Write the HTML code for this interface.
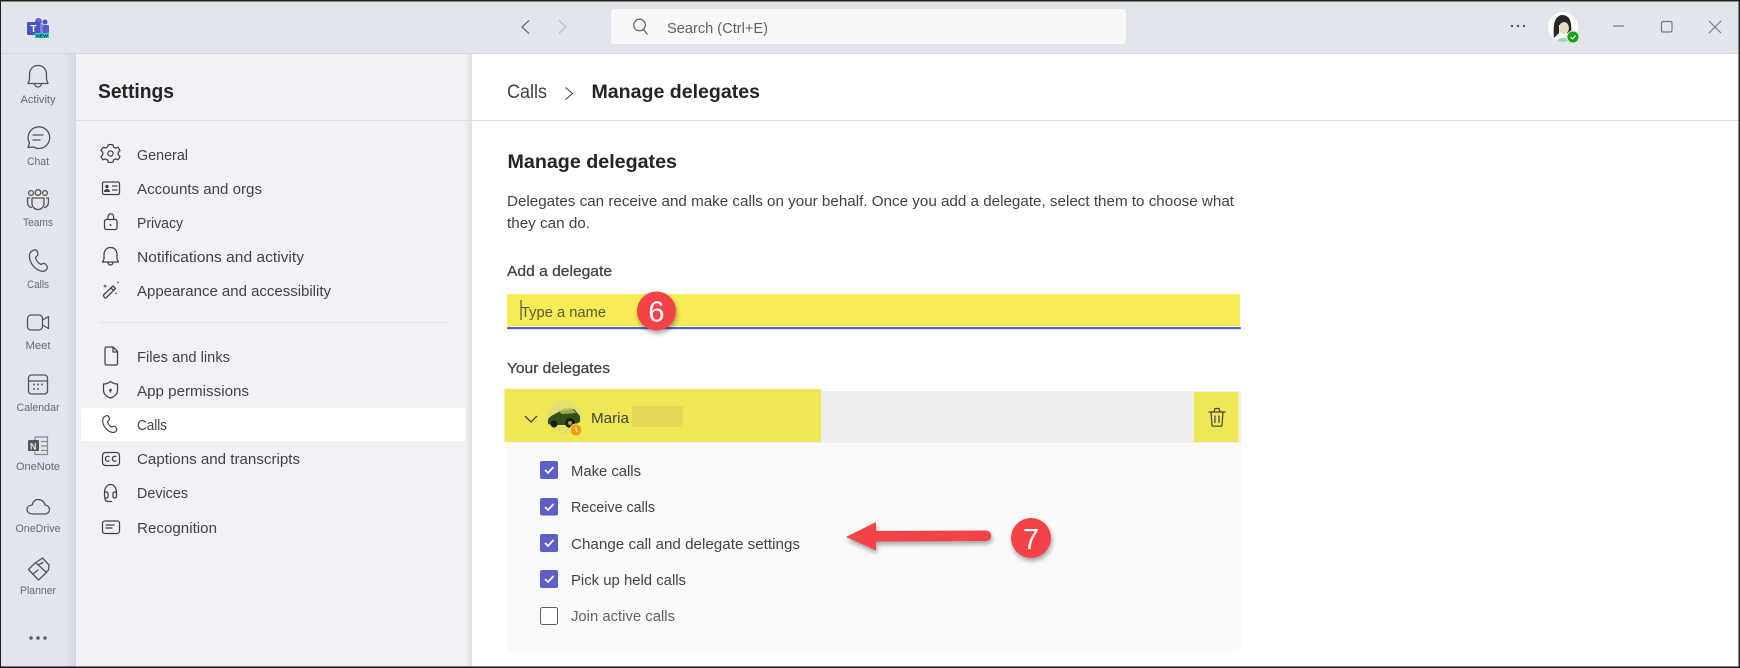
<!DOCTYPE html>
<html lang="en"><head><meta charset="utf-8"><title>Manage delegates</title>
<style>
html,body{margin:0;padding:0;background:#fff;width:1740px;height:668px;overflow:hidden}
svg{display:block;position:absolute;left:0;top:0}
text{font-family:"Liberation Sans",sans-serif}
.r{font-size:11px;fill:#6a6a6a;text-anchor:middle}
.s{font-size:15px;fill:#424242}
.m{fill:#424242;stroke:#424242;stroke-width:.25;font-size:14.5px}
.i{fill:none;stroke:#555;stroke-width:1.3;stroke-linecap:round;stroke-linejoin:round}
.j{fill:none;stroke:#424242;stroke-width:1.25;stroke-linecap:round;stroke-linejoin:round}
</style></head><body>
<svg width="1740" height="668" viewBox="0 0 1740 668" xmlns="http://www.w3.org/2000/svg">
<defs>
<linearGradient id="rs" x1="0" x2="1" y1="0" y2="0"><stop offset="0" stop-color="#e2e5ed"/><stop offset="1" stop-color="#d5d8e0"/></linearGradient>
<linearGradient id="ss" x1="0" x2="1" y1="0" y2="0"><stop offset="0" stop-color="#f1f2f6"/><stop offset="1" stop-color="#e0e1e6"/></linearGradient>
<filter id="sh" x="-30%" y="-30%" width="170%" height="170%"><feDropShadow dx="1" dy="3" stdDeviation="2.5" flood-color="#000" flood-opacity=".35"/></filter>
</defs>
<rect width="1740" height="668" fill="#fff"/>
<!-- title bar -->
<rect width="1740" height="53" fill="#e2e5ec"/>
<rect y="53" width="1740" height="1" fill="#d3d5da"/>
<!-- rail -->
<rect y="54" width="76" height="614" fill="#e2e5ed"/>
<rect x="64" y="54" width="12" height="614" fill="url(#rs)"/>
<!-- sidebar -->
<rect x="76" y="54" width="396" height="614" fill="#f1f2f6"/>
<rect x="464" y="54" width="8" height="614" fill="url(#ss)"/>
<rect x="76" y="120" width="1664" height="1" fill="#dfdfe2"/>
<rect x="99" y="322" width="349" height="1" fill="#e2e3e7"/>
<rect x="81" y="408" width="385" height="33" rx="2" fill="#fff"/>

<!-- teams logo -->
<circle cx="38.500" cy="21.500" r="3.500" fill="#6166c9"/><circle cx="45" cy="22" r="2.500" fill="#4f55b8"/>
<rect x="41" y="25" width="8" height="8" rx="1" fill="#5a60c4"/>
<rect x="33" y="24" width="10" height="10" rx="1" fill="#7b83eb"/>
<rect x="27" y="22" width="13" height="13" rx="1" fill="#4b53bc"/>
<text x="30.500" y="32" font-size="10" font-weight="700" fill="#fff">T</text>
<rect x="35" y="33" width="14" height="5" fill="#1fd6c6"/>
<text x="36" y="37.500" font-size="4.500" font-weight="700" fill="#123" textLength="12" lengthAdjust="spacingAndGlyphs">NEW</text>

<!-- nav chevrons -->
<path d="M529 20.500l-7 6.500 7 6.500" fill="none" stroke="#555" stroke-width="1.100"/>
<path d="M559 20.500l7 6.500-7 6.500" fill="none" stroke="#b5b8be" stroke-width="1.100"/>
<!-- search -->
<rect x="611" y="9" width="515" height="35" rx="3" fill="#f8f8f9"/>
<circle cx="639.500" cy="25" r="5.800" fill="none" stroke="#555" stroke-width="1.100"/><path d="M643.500 29.500l4 5" stroke="#555" stroke-width="1.100"/>
<text x="667" y="33" font-size="14.500" fill="#616161" textLength="101" lengthAdjust="spacingAndGlyphs">Search (Ctrl+E)</text>
<!-- title right -->
<circle cx="1512" cy="26" r="1.200" fill="#555"/><circle cx="1518" cy="26" r="1.200" fill="#555"/><circle cx="1524" cy="26" r="1.200" fill="#555"/>
<circle cx="1563" cy="27" r="15" fill="#fff"/>
<path d="M1554 38c-1-12 0-22 8-23 9 0 10 9 9 20l-4-2v-8h-8v8z" fill="#2a2527"/>
<ellipse cx="1564" cy="28" rx="5" ry="6" fill="#e9dcc0"/>
<path d="M1557 41c2-4 10-4 12 0l-6 1z" fill="#9fd3b4"/>
<circle cx="1573" cy="37" r="6.500" fill="#e2e5ec"/><circle cx="1573" cy="37" r="5.500" fill="#13a10e"/><path d="M1570.500 37l2 2 3-3.500" fill="none" stroke="#fff" stroke-width="1.200"/>
<path d="M1613 26h11" stroke="#777" stroke-width="1.200"/>
<rect x="1661.500" y="21.500" width="10.500" height="10.500" rx="1.500" fill="none" stroke="#777" stroke-width="1.200"/>
<path d="M1709 21l12 12M1721 21l-12 12" stroke="#777" stroke-width="1.100"/>

<!-- rail icons -->
<g class="i">
<path d="M38 65.500c-5.500 0-8.500 4-8.500 9v5l-1.500 4h20l-1.500-4v-5c0-5-3-9-8.500-9z"/><path d="M34.500 84c.5 2 2 3 3.500 3s3-1 3.500-3"/>
<path d="M28 147.500l1.500-4.500a10.800 10.800 0 1 1 4 4z"/><path d="M33 135h10M33 140h7"/>
<circle cx="31" cy="193" r="2.400"/><circle cx="38" cy="192.500" r="2.800"/><circle cx="45" cy="193" r="2.400"/>
<path d="M32 198h12v5.500a6 6 0 0 1-12 0z"/><path d="M29.500 198h-2v4c0 3 1.500 5 4 5.500M46.500 198h2v4c0 3-1.500 5-4 5.500"/>
<path id="ph" d="M31.500 251.500c1.500-1.500 3.500-2 4.500-1.500 1 .5 2 3 2 4.500 0 1-1.500 1.500-2.500 3 .5 2.500 2.500 5.500 5.500 7 1.500-1 2.500-1.500 3.500-1 1.200.5 2.800 2.500 3 4 0 1.500-2 3.500-4 3.800-3 .3-7-1.500-10-5-3-3.500-4.500-8-4-11 .2-1.500.8-3.300 2-3.800z"/>
<rect x="27.500" y="315" width="15" height="15" rx="3.500"/><path d="M42.500 320l6-3.500v12l-6-3.500"/>
<rect x="28.500" y="375" width="19" height="19" rx="3"/><path d="M28.500 381h19"/>
<path d="M38 499.500c-3 0-5.300 2.200-5.800 5.500-3 .3-5.200 2-5.200 4.500 0 2.500 2.500 4.500 5 4.500h13c2.500 0 4.500-2 4.500-4.500 0-2.500-2-4.200-4.500-4.500-.5-3.300-3.500-5.500-7-5.500z"/>
<path d="M28.500 569.500l7-7 11 10-8 7.500z"/><path d="M36 562.500l6.500-4.500 6.500 7-.5 5-2.500 2.500"/><path d="M38 565l5-2.500M33 574l5-4"/>
</g>
<g fill="#616161"><circle cx="34" cy="384.500" r="1"/><circle cx="38" cy="384.500" r="1"/><circle cx="42" cy="384.500" r="1"/><circle cx="34" cy="389" r="1"/><circle cx="38" cy="389" r="1"/></g>
<rect x="28" y="440" width="11" height="11" rx="1" fill="#555"/><text x="30" y="449.500" font-size="9" font-weight="700" fill="#e2e5ed">N</text>
<path d="M35 440v-3h12.500v17.500h-12.500v-3M41 441.500h6.500M41 446h6.500M41 450.500h6.500" fill="none" stroke="#8a8a8a" stroke-width="1.200"/>
<circle cx="31" cy="638" r="1.800" fill="#616161"/><circle cx="38" cy="638" r="1.800" fill="#616161"/><circle cx="45" cy="638" r="1.800" fill="#616161"/>

<!-- rail labels -->
<text class="r" x="38" y="103" textLength="35" lengthAdjust="spacingAndGlyphs">Activity</text>
<text class="r" x="38" y="165" textLength="22" lengthAdjust="spacingAndGlyphs">Chat</text>
<text class="r" x="38" y="226" textLength="30" lengthAdjust="spacingAndGlyphs">Teams</text>
<text class="r" x="38" y="288" textLength="22" lengthAdjust="spacingAndGlyphs">Calls</text>
<text class="r" x="38" y="349" textLength="25" lengthAdjust="spacingAndGlyphs">Meet</text>
<text class="r" x="38" y="411" textLength="43" lengthAdjust="spacingAndGlyphs">Calendar</text>
<text class="r" x="38" y="470" textLength="44" lengthAdjust="spacingAndGlyphs">OneNote</text>
<text class="r" x="38" y="532" textLength="45" lengthAdjust="spacingAndGlyphs">OneDrive</text>
<text class="r" x="38" y="594" textLength="36" lengthAdjust="spacingAndGlyphs">Planner</text>

<!-- settings -->
<text x="98" y="98" font-size="20" font-weight="700" fill="#242424" textLength="76" lengthAdjust="spacingAndGlyphs">Settings</text>
<text class="s" x="137" y="160" textLength="51" lengthAdjust="spacingAndGlyphs">General</text>
<text class="s" x="137" y="194" textLength="125" lengthAdjust="spacingAndGlyphs">Accounts and orgs</text>
<text class="s" x="137" y="228" textLength="46" lengthAdjust="spacingAndGlyphs">Privacy</text>
<text class="s" x="137" y="262" textLength="167" lengthAdjust="spacingAndGlyphs">Notifications and activity</text>
<text class="s" x="137" y="296" textLength="194" lengthAdjust="spacingAndGlyphs">Appearance and accessibility</text>
<text class="s" x="137" y="362" textLength="93" lengthAdjust="spacingAndGlyphs">Files and links</text>
<text class="s" x="137" y="396" textLength="112" lengthAdjust="spacingAndGlyphs">App permissions</text>
<text class="s" x="137" y="430" textLength="30" lengthAdjust="spacingAndGlyphs">Calls</text>
<text class="s" x="137" y="464" textLength="163" lengthAdjust="spacingAndGlyphs">Captions and transcripts</text>
<text class="s" x="137" y="498" textLength="51" lengthAdjust="spacingAndGlyphs">Devices</text>
<text class="s" x="137" y="533" textLength="80" lengthAdjust="spacingAndGlyphs">Recognition</text>

<!-- settings icons -->
<g class="j">
<path d="M110.500 144.500c.8 0 1.600 .1 2.400 .3l.6 2.300 2.200 1 2.200-.9c1 1 1.700 2.200 2.100 3.500l-1.800 1.500v2.600l1.800 1.500c-.4 1.300-1.100 2.500-2.100 3.500l-2.200-.9-2.200 1-.6 2.300c-1.600 .4-3.200 .4-4.800 0l-.6-2.300-2.200-1-2.200 .9c-1-1-1.700-2.200-2.100-3.500l1.800-1.500v-2.600l-1.800-1.500c.4-1.300 1.100-2.500 2.100-3.500l2.200 .9 2.200-1 .6-2.300c.8-.2 1.600-.3 2.400-.3z"/><circle cx="110.500" cy="153.500" r="2.600"/>
<rect x="102.500" y="182" width="17" height="12.500" rx="1.500"/><path d="M112.500 186h4.500M112.500 190h4.500"/>
<rect x="104.500" y="219.500" width="12.500" height="10" rx="1.800"/><path d="M108 219.500v-3a2.800 2.800 0 0 1 5.600 0v3"/>
<path d="M110.500 247.500c-4.500 0-6.500 3.500-6.500 7.500v4l-1.500 3h16l-1.500-3v-4c0-4-2-7.500-6.500-7.500z"/><path d="M108 262.500c.3 1.500 1.300 2.500 2.500 2.500s2.200-1 2.500-2.500"/>
<path d="M103.500 295l9.500-9 2.500 2.500-9.500 9.500c-1 .5-2.500-1.500-2.500-3z"/><path d="M111 288l2.500 2.500"/>
<path d="M105 348.500c0-1 .5-1.500 1.500-1.500h6.500l4.500 4.500v12c0 1-.5 1.500-1.500 1.500h-9.500c-1 0-1.500-.5-1.500-1.500z"/><path d="M113 347v5h4.500"/>
<path d="M110.500 381.500c2.500 2 5 2.500 7 2.500v6c0 4-2.500 6.500-7 8-4.500-1.500-7-4-7-8v-6c2 0 4.500-.5 7-2.500z"/><path d="M110.500 392v-2"/>
<path transform="translate(79.800 220.800) scale(.78)" d="M31.500 251.500c1.500-1.500 3.500-2 4.500-1.500 1 .5 2 3 2 4.500 0 1-1.500 1.500-2.500 3 .5 2.500 2.500 5.500 5.500 7 1.500-1 2.500-1.500 3.500-1 1.200.5 2.800 2.500 3 4 0 1.500-2 3.500-4 3.800-3 .3-7-1.500-10-5-3-3.500-4.500-8-4-11 .2-1.500.8-3.300 2-3.800z" stroke-width="1.500"/>
<rect x="102.500" y="452.500" width="17" height="13" rx="3"/>
<path d="M109 456.500a2.500 2.500 0 1 0 0 4.500M116 456.500a2.500 2.500 0 1 0 0 4.500"/>
<path d="M104.500 493c0-5 2.500-8.500 6-8.500s6 3.500 6 8.500"/><rect x="104.500" y="492" width="3.500" height="6" rx="1.500"/><rect x="113" y="492" width="3.500" height="6" rx="1.500"/><path d="M105 498c0 3 1 3.500 3.500 3.500M108.500 501.500h3"/>
<rect x="102.500" y="521" width="17" height="12.500" rx="2.500"/><path d="M106 525h8M106 528h6"/>
</g>
<circle cx="110.500" cy="225" r="1" fill="#424242"/><circle cx="110.500" cy="390" r="1.300" fill="#424242"/>
<circle cx="107" cy="186.500" r="1.700" fill="#424242"/><path d="M104 192c0-2 1.500-3 3-3s3 1 3 3z" fill="#424242"/>
<path d="M105 284l.6 1.500 1.400.5-1.400.6-.6 1.400-.6-1.400-1.400-.6 1.400-.5zM118 281l.4 1 .9.4-.9.4-.4 1-.4-1-.9-.4.9-.4zM116 292l.4 1 .9.4-.9.4-.4 1-.4-1-.9-.4.9-.4z" fill="#424242"/>

<!-- main header -->
<text x="507" y="98" font-size="19" fill="#424242" textLength="40" lengthAdjust="spacingAndGlyphs">Calls</text>
<path d="M565.500 87.500l7 6-7 6" fill="none" stroke="#424242" stroke-width="1.100"/>
<text x="591.500" y="98" font-size="19" font-weight="700" fill="#242424" textLength="168.500" lengthAdjust="spacingAndGlyphs">Manage delegates</text>
<text x="507.500" y="168" font-size="19" font-weight="700" fill="#242424" textLength="169.500" lengthAdjust="spacingAndGlyphs">Manage delegates</text>
<text x="507" y="206" font-size="14.500" fill="#424242" textLength="727" lengthAdjust="spacingAndGlyphs">Delegates can receive and make calls on your behalf. Once you add a delegate, select them to choose what</text>
<text x="507" y="228" font-size="14.500" fill="#424242" textLength="83" lengthAdjust="spacingAndGlyphs">they can do.</text>
<text class="m" x="507" y="276" textLength="105" lengthAdjust="spacingAndGlyphs">Add a delegate</text>

<!-- input -->
<rect x="507" y="294" width="733" height="32.500" fill="#f6ec55"/>
<rect x="507" y="327" width="734" height="2.200" rx="1" fill="#5b5fc7"/>
<rect x="520.500" y="300" width="1" height="20" fill="#333"/>
<text x="521" y="317" font-size="14.500" fill="#5b5b3a" textLength="85" lengthAdjust="spacingAndGlyphs">Type a name</text>
<circle cx="656.500" cy="311" r="19.500" fill="#f4424a" filter="url(#sh)"/>
<text x="656.500" y="321.500" font-size="29" fill="#fff" text-anchor="middle">6</text>

<text class="m" x="507" y="373" textLength="103" lengthAdjust="spacingAndGlyphs">Your delegates</text>

<!-- delegate panel -->
<path d="M507 391h734v254a8 8 0 0 1-8 8h-718a8 8 0 0 1-8-8z" fill="#fafafa"/>
<rect x="507" y="391" width="734" height="52" fill="#eeeeee"/>
<rect x="504.500" y="389" width="316.500" height="53" fill="#efe755"/>
<rect x="1194" y="392" width="44.500" height="50" fill="#efe755"/>
<path d="M525 416l6 6 6-6" fill="none" stroke="#333" stroke-width="1.200"/>
<circle cx="564" cy="417" r="17" fill="#e6de6e"/>
<path d="M548 420c2-5 8-6 12-9l14-2 6 7v6l-6 3h-22l-4-1z" fill="#35501f"/>
<path d="M558 411l6-3 8 0 4 5-14 1z" fill="#b5c455" opacity=".8"/>
<circle cx="554" cy="424" r="3.500" fill="#1c1c12"/><circle cx="570" cy="423" r="5" fill="#1c1c12"/><circle cx="570" cy="423" r="2" fill="#9aa34a"/>
<circle cx="576" cy="430" r="6.500" fill="#efe755"/><circle cx="576" cy="430" r="5.500" fill="#f59e0b"/>
<path d="M576 427v3l1.500 2" stroke="#fff" stroke-width="1" fill="none"/>
<text x="591" y="423" font-size="15" fill="#424242" textLength="38" lengthAdjust="spacingAndGlyphs">Maria</text>
<rect x="632" y="406" width="51" height="21" fill="#e2d957"/>
<g fill="none" stroke="#424242" stroke-width="1.200" stroke-linejoin="round" stroke-linecap="round">
<path d="M1209 412h16M1214 412l1-3.500h4l1 3.500"/><path d="M1211 412l1 13c.1 .8 .6 1.200 1.300 1.200h7.400c.7 0 1.200-.4 1.300-1.200l1-13"/><path d="M1215 416v6.500M1219 416v6.500"/>
</g>

<!-- checks -->
<g fill="#5b5fc7"><rect x="540" y="461" width="18" height="18" rx="2"/><rect x="540" y="498" width="18" height="17.500" rx="2"/><rect x="540" y="534" width="18" height="18" rx="2"/><rect x="540" y="570" width="18" height="18" rx="2"/></g>
<g fill="none" stroke="#fff" stroke-width="1.800"><path d="M545 470l3 3 5.500-6"/><path d="M545 507l3 3 5.500-6"/><path d="M545 543l3 3 5.500-6"/><path d="M545 579l3 3 5.500-6"/></g>
<rect x="540.500" y="607.500" width="17" height="17" rx="2" fill="#fff" stroke="#616161"/>
<text x="571" y="476" font-size="14.500" fill="#424242" textLength="70" lengthAdjust="spacingAndGlyphs">Make calls</text>
<text x="571" y="512" font-size="14.500" fill="#424242" textLength="84" lengthAdjust="spacingAndGlyphs">Receive calls</text>
<text x="571" y="549" font-size="14.500" fill="#424242" textLength="229" lengthAdjust="spacingAndGlyphs">Change call and delegate settings</text>
<text x="571" y="585" font-size="14.500" fill="#424242" textLength="115" lengthAdjust="spacingAndGlyphs">Pick up held calls</text>
<text x="571" y="621" font-size="14.500" fill="#616161" textLength="104" lengthAdjust="spacingAndGlyphs">Join active calls</text>

<!-- arrow -->
<path d="M846 537l30-15v9l110-.5a5 5 0 0 1 0 10.500l-110 .5v9z" fill="#f4424a" filter="url(#sh)"/>
<circle cx="1031" cy="538" r="20" fill="#f4424a" filter="url(#sh)"/>
<text x="1031" y="549" font-size="29" fill="#fff" text-anchor="middle">7</text>

<!-- window borders -->
<rect width="1740" height="1.500" fill="#222"/>
<rect width="1" height="668" fill="#222"/>
<rect y="666.500" width="1740" height="1.500" fill="#111"/>
<rect x="1738.500" width="1.500" height="668" fill="#222"/>
</svg>
</body></html>
